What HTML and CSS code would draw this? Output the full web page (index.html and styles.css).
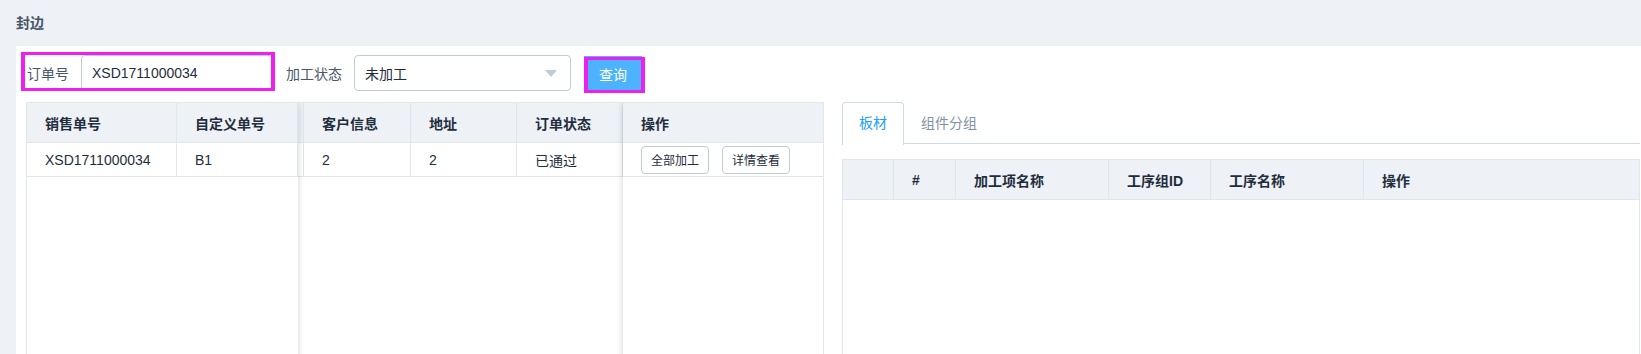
FILE: index.html
```html
<!DOCTYPE html>
<html lang="zh-CN">
<head>
    <meta charset="UTF-8">
    <meta name="viewport" content="width=device-width, initial-scale=1.0">
    <title>封边</title>
    <link rel="stylesheet" href="styles.css">
</head>
<body>
    <h2 class="page-title">封边</h2>

    <div class="panel">
        <form class="search-form">
            <div class="form-item marked">
                <label>订单号</label>
                <input type="text" class="text-input order-no" value="XSD1711000034">
            </div>
            <div class="form-item">
                <label>加工状态</label>
                <div class="select">
                    <span>未加工</span>
                    <i class="caret"></i>
                </div>
            </div>
            <button type="button" class="btn-primary marked">查询</button>
        </form>

        <div class="split">
            <!-- order list -->
            <div class="order-table">
                <div class="fixed-left">
                    <div class="row head cols-left">
                        <div class="cell">销售单号</div>
                        <div class="cell">自定义单号</div>
                    </div>
                    <div class="row cols-left">
                        <div class="cell">XSD1711000034</div>
                        <div class="cell">B1</div>
                    </div>
                </div>
                <div class="scroll">
                    <div class="row head cols-mid">
                        <div class="cell spacer"></div>
                        <div class="cell">客户信息</div>
                        <div class="cell">地址</div>
                        <div class="cell">订单状态</div>
                    </div>
                    <div class="row cols-mid">
                        <div class="cell spacer"></div>
                        <div class="cell">2</div>
                        <div class="cell">2</div>
                        <div class="cell">已通过</div>
                    </div>
                </div>
                <div class="fixed-right">
                    <div class="row head">
                        <div class="cell">操作</div>
                    </div>
                    <div class="row">
                        <div class="cell actions">
                            <button type="button" class="btn-mini">全部加工</button>
                            <button type="button" class="btn-mini">详情查看</button>
                        </div>
                    </div>
                </div>
            </div>

            <!-- process detail -->
            <div class="detail">
                <div class="tabs">
                    <div class="tab active">板材</div>
                    <div class="tab">组件分组</div>
                </div>
                <div class="process-table">
                    <div class="row head cols-process">
                        <div class="cell"></div>
                        <div class="cell">#</div>
                        <div class="cell">加工项名称</div>
                        <div class="cell">工序组ID</div>
                        <div class="cell">工序名称</div>
                        <div class="cell">操作</div>
                    </div>
                </div>
            </div>
        </div>
    </div>
</body>
</html>
```

FILE: styles.css
```css
body {
    font-family: 'Liberation Sans', 'Noto Sans CJK SC', sans-serif;
    font-size: 14px;
    margin: 0;
    padding: 0;
    background-color: #eef1f6;
    color: #1f2d3d;
    overflow: hidden;
}
.page-title {
    margin: 0;
    height: 46px;
    line-height: 46px;
    padding-left: 16px;
    font-size: 14px;
    font-weight: bold;
    color: #475669;
}
.panel {
    margin-left: 16px;
    margin-right: -9px;
    padding: 9px 10px 0;
    background-color: #fff;
    height: 308px;
    box-sizing: border-box;
    overflow: hidden;
}
.search-form {
    display: flex;
    align-items: flex-start;
    height: 36px;
    margin-bottom: 11px;
    padding-left: 1px;
}
.form-item {
    display: flex;
    align-items: center;
    margin-right: 13px;
}
.form-item label {
    color: #48576a;
    padding-right: 12px;
}
.text-input, .select {
    height: 36px;
    box-sizing: border-box;
    border: 1px solid #bfcbd9;
    border-radius: 4px;
    padding: 0 10px;
    font-family: inherit;
    font-size: 14px;
    color: #1f2d3d;
    outline: none;
}
.order-no {
    width: 192px;
}
.select {
    width: 217px;
    display: flex;
    align-items: center;
    justify-content: space-between;
}
.caret {
    width: 0;
    height: 0;
    border-left: 6px solid transparent;
    border-right: 6px solid transparent;
    border-top: 7px solid #bfcbd9;
    margin-right: 3px;
}
.btn-primary {
    height: 36px;
    margin-top: 1px;
    padding: 0 15px;
    border: none;
    border-radius: 0;
    background-color: #4db3ff;
    color: #fff;
    font-family: inherit;
    font-size: 14px;
}
/* magenta marker boxes drawn over the form */
.marked {
    position: relative;
}
.marked::after {
    content: "";
    position: absolute;
    border: solid #f01ff0;
    border-width: 3px 4px;
    pointer-events: none;
}
.form-item.marked::after {
    top: -3px;
    left: -6px;
    right: -2px;
    bottom: 0;
}
.btn-primary.marked::after {
    top: 1px;
    left: 0;
    right: -3px;
    bottom: -1px;
}
.split {
    display: grid;
    grid-template-columns: 798px 798px;
    gap: 18px;
}
.row {
    display: grid;
    height: 34px;
}
.row.head {
    height: 40px;
    background-color: #eef1f6;
    font-weight: bold;
}
.cell {
    display: flex;
    align-items: center;
    padding: 0 18px;
    border-right: 1px solid #dfe6ec;
    border-bottom: 1px solid #dfe6ec;
    white-space: nowrap;
    overflow: hidden;
}
.cell.spacer {
    padding: 0;
}
.order-table {
    display: flex;
    height: 320px;
    border: 1px solid #dfe6ec;
    overflow: hidden;
}
.fixed-left, .fixed-right {
    position: relative;
    z-index: 1;
    background-color: #fff;
}
.fixed-left {
    width: 271px;
    box-shadow: 1px 0 6px rgba(0, 0, 0, 0.14);
}
.cols-left {
    grid-template-columns: 150px 121px;
}
.scroll {
    width: 325px;
}
.cols-mid {
    grid-template-columns: 6px 107px 106px 106px;
}
.fixed-right {
    flex: 1;
    box-shadow: -1px 0 6px rgba(0, 0, 0, 0.14);
}
.fixed-right .cell {
    border-right: none;
}
.actions {
    gap: 13px;
}
.btn-mini {
    height: 28px;
    padding: 0 9px;
    border: 1px solid #bfcbd9;
    border-radius: 4px;
    background-color: #fff;
    color: #1f2d3d;
    font-family: inherit;
    font-size: 12px;
}
.tabs {
    display: flex;
    height: 41px;
    border-bottom: 1px solid #d1dbe5;
    margin-bottom: 15px;
}
.tab {
    height: 41px;
    line-height: 41px;
    padding: 0 16px;
    color: #8391a5;
    border: 1px solid transparent;
    border-bottom: none;
}
.tab.active {
    color: #20a0ff;
    border-color: #d1dbe5;
    border-radius: 4px 4px 0 0;
    background-color: #fff;
    height: 42px;
}
.process-table {
    height: 300px;
    border: 1px solid #dfe6ec;
}
.cols-process {
    grid-template-columns: 51px 62px 153px 102px 153px 1fr;
}
.cols-process .cell:last-child {
    border-right: none;
}
```
